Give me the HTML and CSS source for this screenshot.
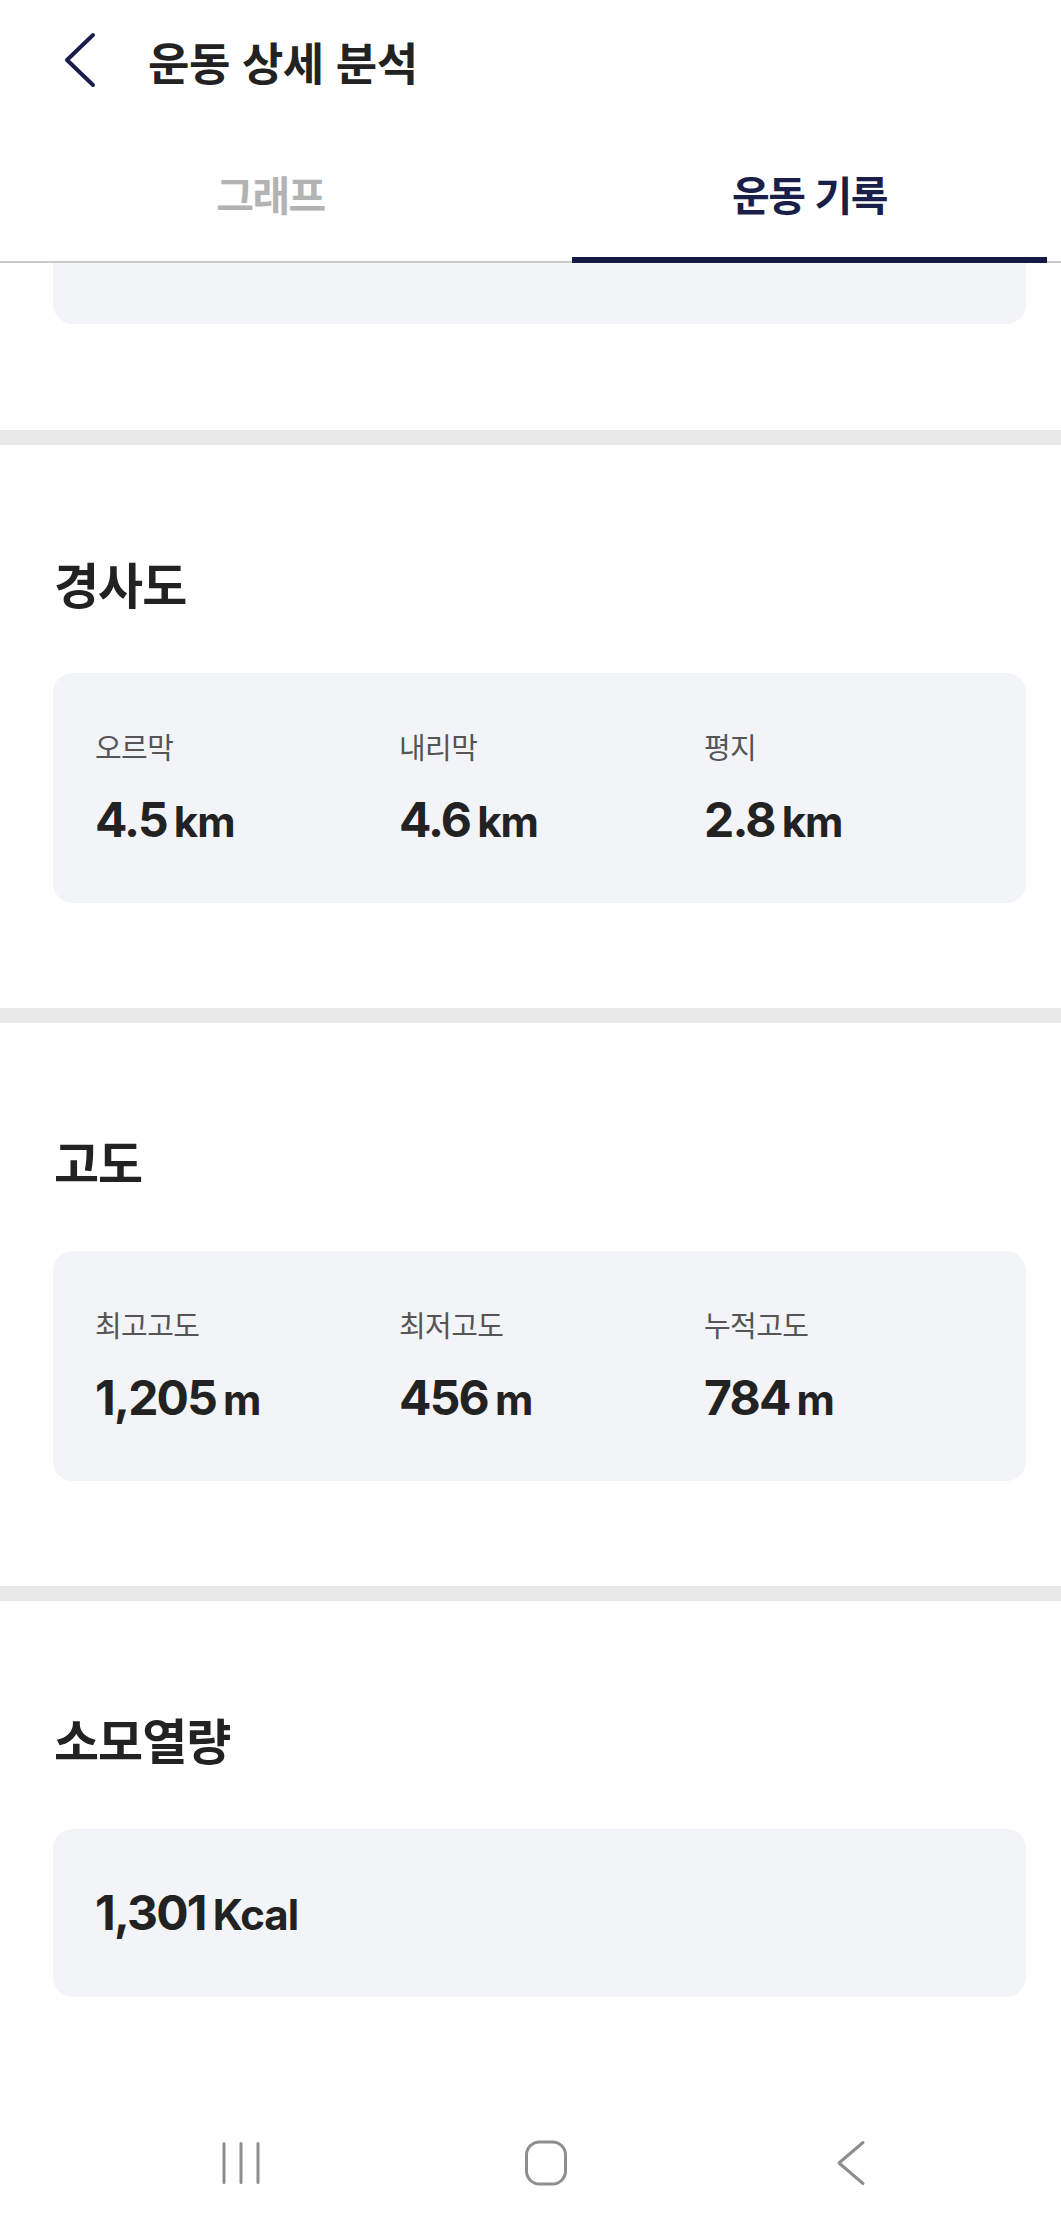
FILE: index.html
```html
<!DOCTYPE html>
<html lang="ko">
<head>
<meta charset="utf-8">
<title>운동 상세 분석</title>
<link rel="stylesheet" href="styles.css">
</head>
<body>
<div class="screen">
  <header class="appbar">
    <svg class="back" width="40" height="60" viewBox="0 0 40 60" aria-hidden="true">
      <path d="M33 3 L7 28 L33 53" fill="none" stroke="#1a1f4a" stroke-width="4" stroke-linecap="round" stroke-linejoin="round"/>
    </svg>
    <h1 class="title">운동 상세 분석</h1>
  </header>

  <nav class="tabs">
    <div class="tab">그래프</div>
    <div class="tab active">운동 기록</div>
  </nav>

  <main class="content">
    <section class="sec sec-tail">
      <div class="card card-tail"></div>
    </section>
    <div class="divider"></div>

    <section class="sec">
      <h2 class="sec-title">경사도</h2>
      <div class="card stats">
        <div class="stat"><div class="label">오르막</div><div class="value">4.5<span class="unit">km</span></div></div>
        <div class="stat"><div class="label">내리막</div><div class="value">4.6<span class="unit">km</span></div></div>
        <div class="stat"><div class="label">평지</div><div class="value">2.8<span class="unit">km</span></div></div>
      </div>
    </section>
    <div class="divider"></div>

    <section class="sec">
      <h2 class="sec-title">고도</h2>
      <div class="card stats">
        <div class="stat"><div class="label">최고고도</div><div class="value">1,205<span class="unit">m</span></div></div>
        <div class="stat"><div class="label">최저고도</div><div class="value">456<span class="unit">m</span></div></div>
        <div class="stat"><div class="label">누적고도</div><div class="value">784<span class="unit">m</span></div></div>
      </div>
    </section>
    <div class="divider"></div>

    <section class="sec sec-last">
      <h2 class="sec-title">소모열량</h2>
      <div class="card single">
        <div class="value">1,301<span class="unit">Kcal</span></div>
      </div>
    </section>
  </main>

  <footer class="sysnav">
    <div class="navcell">
      <svg width="40" height="44" viewBox="0 0 40 44" aria-hidden="true">
        <path d="M3 2.5 V41.5 M20 2.5 V41.5 M37 2.5 V41.5" stroke="#8e8e8e" stroke-width="3" stroke-linecap="round"/>
      </svg>
    </div>
    <div class="navcell">
      <svg width="46" height="46" viewBox="0 0 46 46" aria-hidden="true">
        <rect x="3.5" y="2" width="39" height="42" rx="13" ry="13" fill="none" stroke="#8e8e8e" stroke-width="3"/>
      </svg>
    </div>
    <div class="navcell">
      <svg width="32" height="46" viewBox="0 0 32 46" aria-hidden="true">
        <path d="M28 2.5 L4 23 L28 43.5" fill="none" stroke="#8e8e8e" stroke-width="3" stroke-linecap="round" stroke-linejoin="round"/>
      </svg>
    </div>
  </footer>
</div>
</body>
</html>
```

FILE: styles.css
```css
* { box-sizing: border-box; }

html, body {
  margin: 0;
  padding: 0;
  background: #ffffff;
}

body {
  font-family: "Noto Sans CJK KR", "Noto Sans", sans-serif;
  color: #222222;
}

.screen {
  width: 1061px;
  height: 2228px;
  overflow: hidden;
  display: flex;
  flex-direction: column;
  background: #ffffff;
}

/* ---------- App bar ---------- */
.appbar {
  height: 124px;
  display: flex;
  align-items: center;
  padding-left: 60px;
  flex: none;
}

.back {
  display: block;
  flex: none;
}

.title {
  margin: 0 0 0 48px;
  font-size: 45px;
  font-weight: 700;
  letter-spacing: -0.5px;
  line-height: 60px;
  color: #222222;
}

/* ---------- Tabs ---------- */
.tabs {
  height: 139px;
  flex: none;
  display: grid;
  grid-template-columns: 475px 475px;
  column-gap: 64px;
  padding-left: 33px;
  border-bottom: 2px solid #cacacd;
}

.tab {
  position: relative;
  display: flex;
  align-items: center;
  justify-content: center;
  font-size: 41px;
  font-weight: 700;
  letter-spacing: -1.5px;
  color: #b3b3b3;
}

.tab.active {
  color: #1a1f4a;
}

.tab.active::after {
  content: "";
  position: absolute;
  left: 0;
  right: 0;
  bottom: -2px;
  height: 6px;
  background: #141a44;
}

/* ---------- Content ---------- */
.content {
  flex: none;
}

.sec {
  padding: 108px 35px 105px 53px;
}

.sec-tail {
  padding-top: 0;
  padding-bottom: 106px;
}

.sec-last {
  padding-bottom: 0;
}

.divider {
  height: 15px;
  background: #e9e9e9;
}

.sec-title {
  margin: 0 0 60px 1px;
  font-size: 49px;
  font-weight: 700;
  letter-spacing: -1px;
  line-height: 60px;
  color: #222222;
}

.card {
  background: #f3f4f8;
  border-radius: 20px;
}

.card-tail {
  height: 61px;
  border-radius: 0 0 20px 20px;
}

.stats {
  height: 230px;
  padding: 55px 0 55px 42px;
  display: grid;
  grid-template-columns: 304px 305px 1fr;
}

.single {
  height: 168px;
  padding: 56px 0 56px 42px;
}

.label {
  font-size: 29px;
  line-height: 36px;
  font-weight: 400;
  letter-spacing: -0.6px;
  color: #555555;
  margin-bottom: 28px;
}

.value {
  font-family: "Inter", "Noto Sans CJK KR", sans-serif;
  font-size: 48px;
  line-height: 56px;
  font-weight: 700;
  letter-spacing: -1.8px;
  color: #222222;
  white-space: nowrap;
}

.unit {
  font-size: 42px;
  margin-left: 7px;
  letter-spacing: -1px;
}

/* ---------- System nav ---------- */
.sysnav {
  margin-top: auto;
  height: 130px;
  flex: none;
  display: grid;
  grid-template-columns: 305px 305px 305px;
  padding-left: 88px;
  align-items: center;
}

.navcell {
  display: flex;
  justify-content: center;
  align-items: center;
}

.navcell svg {
  display: block;
}
```
